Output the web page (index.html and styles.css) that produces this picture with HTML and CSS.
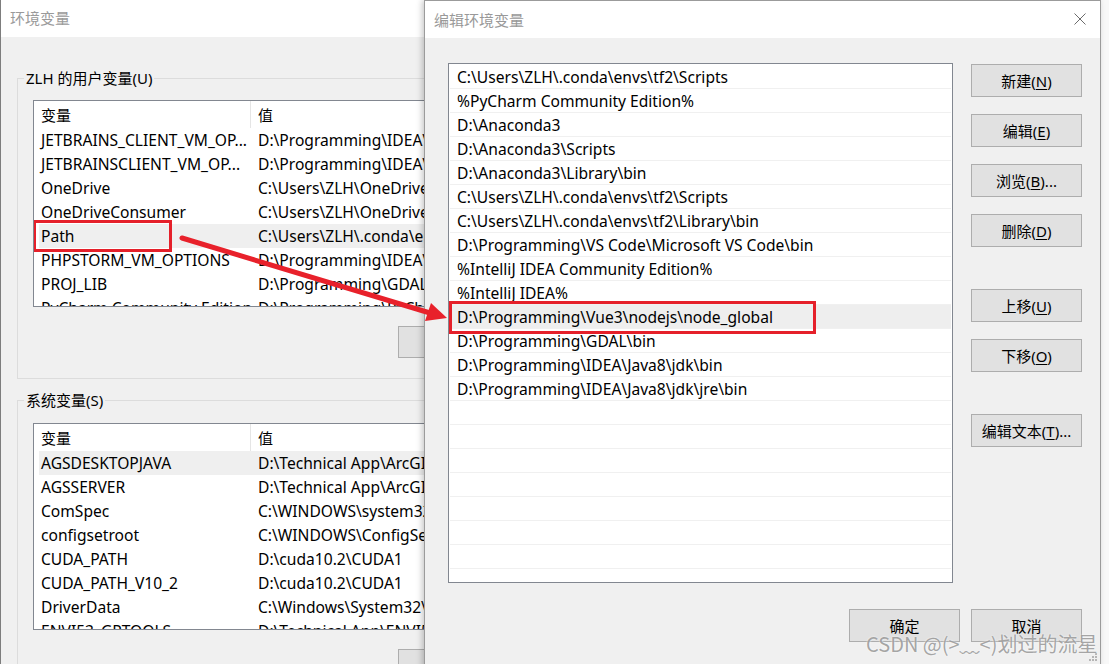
FILE: index.html
```html
<!DOCTYPE html>
<html lang="zh-CN">
<head>
<meta charset="utf-8">
<title>编辑环境变量</title>
<link rel="stylesheet" href="styles.css">
</head>
<body>
<div class="desktop">

  <section class="win env-win">
    <header class="titlebar">环境变量</header>
    <div class="env-body">
      <fieldset class="group">
        <legend>ZLH 的用户变量(U)</legend>
        <div class="listview">
          <div class="lv-head"><div class="c1">变量</div><div class="c2">值</div></div>
          <div class="lv-row"><div class="c1">JETBRAINS_CLIENT_VM_OP...</div><div class="c2">D:\Programming\IDEA\ja-netfilter</div></div>
          <div class="lv-row"><div class="c1">JETBRAINSCLIENT_VM_OP...</div><div class="c2">D:\Programming\IDEA\ja-netfilter</div></div>
          <div class="lv-row"><div class="c1">OneDrive</div><div class="c2">C:\Users\ZLH\OneDrive</div></div>
          <div class="lv-row"><div class="c1">OneDriveConsumer</div><div class="c2">C:\Users\ZLH\OneDrive</div></div>
          <div class="lv-row sel"><div class="c1">Path</div><div class="c2">C:\Users\ZLH\.conda\envs\tf2</div><span class="mark mark-path"></span></div>
          <div class="lv-row"><div class="c1">PHPSTORM_VM_OPTIONS</div><div class="c2">D:\Programming\IDEA\ja-netfilter</div></div>
          <div class="lv-row"><div class="c1">PROJ_LIB</div><div class="c2">D:\Programming\GDAL\projlib</div></div>
          <div class="lv-row"><div class="c1">PyCharm Community Edition</div><div class="c2">D:\Programming\PyCharm</div></div>
        </div>
        <div class="btn-row">
          <button class="btn">新建(<u>N</u>)...</button>
        </div>
      </fieldset>

      <fieldset class="group group-sys">
        <legend>系统变量(S)</legend>
        <div class="listview">
          <div class="lv-head"><div class="c1">变量</div><div class="c2">值</div></div>
          <div class="lv-row sel"><div class="c1">AGSDESKTOPJAVA</div><div class="c2">D:\Technical App\ArcGIS</div></div>
          <div class="lv-row"><div class="c1">AGSSERVER</div><div class="c2">D:\Technical App\ArcGIS</div></div>
          <div class="lv-row"><div class="c1">ComSpec</div><div class="c2">C:\WINDOWS\system32</div></div>
          <div class="lv-row"><div class="c1">configsetroot</div><div class="c2">C:\WINDOWS\ConfigSetRoot</div></div>
          <div class="lv-row"><div class="c1">CUDA_PATH</div><div class="c2">D:\cuda10.2\CUDA1</div></div>
          <div class="lv-row"><div class="c1">CUDA_PATH_V10_2</div><div class="c2">D:\cuda10.2\CUDA1</div></div>
          <div class="lv-row"><div class="c1">DriverData</div><div class="c2">C:\Windows\System32\Drivers</div></div>
          <div class="lv-row"><div class="c1">ENVI53_GPTOOLS</div><div class="c2">D:\Technical App\ENVI53</div></div>
        </div>
        <div class="btn-row">
          <button class="btn">新建(<u>W</u>)...</button>
        </div>
      </fieldset>
    </div>
  </section>

  <section class="win edit-dlg">
    <header class="dlg-title">
      <span>编辑环境变量</span>
      <svg class="close" width="12" height="12" viewBox="0 0 12 12" aria-hidden="true"><path d="M0.5 0.5 L11.5 11.5 M11.5 0.5 L0.5 11.5" stroke="#6b6b6b" stroke-width="1" fill="none"/></svg>
    </header>
    <div class="dlg-body">
      <div class="dlg-main">
        <div class="path-list">
          <div class="path-row">C:\Users\ZLH\.conda\envs\tf2\Scripts</div>
          <div class="path-row">%PyCharm Community Edition%</div>
          <div class="path-row">D:\Anaconda3</div>
          <div class="path-row">D:\Anaconda3\Scripts</div>
          <div class="path-row">D:\Anaconda3\Library\bin</div>
          <div class="path-row">C:\Users\ZLH\.conda\envs\tf2\Scripts</div>
          <div class="path-row">C:\Users\ZLH\.conda\envs\tf2\Library\bin</div>
          <div class="path-row">D:\Programming\VS Code\Microsoft VS Code\bin</div>
          <div class="path-row">%IntelliJ IDEA Community Edition%</div>
          <div class="path-row">%IntelliJ IDEA%</div>
          <div class="path-row sel">D:\Programming\Vue3\nodejs\node_global<span class="mark mark-node"></span></div>
          <div class="path-row">D:\Programming\GDAL\bin</div>
          <div class="path-row">D:\Programming\IDEA\Java8\jdk\bin</div>
          <div class="path-row">D:\Programming\IDEA\Java8\jdk\jre\bin</div>
          <div class="path-row"></div>
          <div class="path-row"></div>
          <div class="path-row"></div>
          <div class="path-row"></div>
          <div class="path-row"></div>
          <div class="path-row"></div>
          <div class="path-row"></div>
          <div class="path-row"></div>
        </div>
        <div class="side">
          <button class="btn">新建(<u>N</u>)</button>
          <button class="btn">编辑(<u>E</u>)</button>
          <button class="btn">浏览(<u>B</u>)...</button>
          <button class="btn">删除(<u>D</u>)</button>
          <button class="btn spaced">上移(<u>U</u>)</button>
          <button class="btn">下移(<u>O</u>)</button>
          <button class="btn spaced">编辑文本(<u>T</u>)...</button>
        </div>
      </div>
      <div class="dlg-foot">
        <button class="btn">确定</button>
        <button class="btn">取消</button>
      </div>
    </div>
  </section>

  <svg class="arrow" width="1109" height="664" viewBox="0 0 1109 664" aria-hidden="true">
    <line x1="182" y1="238" x2="430" y2="313" stroke="#e8212b" stroke-width="5" stroke-linecap="round"/>
    <polygon points="447,318 425,321 431,303" fill="#e8212b"/>
  </svg>

  <svg class="grip" width="10" height="10" viewBox="0 0 10 10" aria-hidden="true">
    <rect x="7" y="1" width="2" height="2" fill="#b5b5b5"/>
    <rect x="4" y="4" width="2" height="2" fill="#b5b5b5"/>
    <rect x="7" y="4" width="2" height="2" fill="#b5b5b5"/>
    <rect x="1" y="7" width="2" height="2" fill="#b5b5b5"/>
    <rect x="4" y="7" width="2" height="2" fill="#b5b5b5"/>
    <rect x="7" y="7" width="2" height="2" fill="#b5b5b5"/>
  </svg>

  <div class="watermark">CSDN @(&gt;﹏&lt;)划过的流星</div>
</div>
</body>
</html>
```

FILE: styles.css
```css
* { box-sizing: border-box; }

html, body {
  margin: 0;
  padding: 0;
}

body {
  width: 1109px;
  height: 664px;
  overflow: hidden;
  background: #f8f8f8;
  font-family: "Noto Sans", "Noto Sans CJK SC", sans-serif;
  font-size: 15px;
  color: #000;
}

.desktop {
  position: relative;
  width: 1109px;
  height: 664px;
  overflow: hidden;
}

.win {
  position: absolute;
  background: #f0f0f0;
}

/* ---------- background window ---------- */
.env-win {
  left: 0;
  top: 0;
  width: 560px;
  height: 720px;
  border-left: 1px solid #7d7d7d;
}

.titlebar {
  height: 37px;
  line-height: 37px;
  background: #fff;
  color: #9a9a9a;
  padding-left: 9px;
}

.env-body {
  padding: 31px 0 0 16px;
}

.group {
  margin: 0;
  width: 530px;
  min-width: 0;
  border: 1px solid #dcdcdc;
  padding: 12px 0 20px 6px;
}

.group legend {
  padding: 0 2px;
  line-height: 20px;
}

.group-sys {
  margin-top: 11px;
  padding-top: 13px;
}

.listview {
  margin-left: 9px;
  width: 500px;
  height: 207px;
  border: 1px solid #828790;
  background: #fff;
  overflow: hidden;
}

.lv-head {
  display: grid;
  grid-template-columns: 212px 1fr;
  height: 27px;
  margin-left: 5px;
}

.lv-head > div {
  height: 27px;
  padding-top: 2px;
  line-height: 25px;
}

.lv-head .c1 {
  padding-left: 2px;
  border-right: 1px solid #e5e5e5;
}

.lv-head .c2 { padding-left: 7px; }

.lv-row {
  position: relative;
  display: grid;
  grid-template-columns: 212px 1fr;
  height: 24px;
  line-height: 24px;
  margin-left: 5px;
  white-space: nowrap;
  font-size: 15.6px;
}

.lv-row > div { overflow: hidden; }
.lv-row .c1 { padding-left: 2px; }
.lv-row .c2 { padding-left: 7px; }

.lv-row.sel { background: #efefef; }

.btn-row {
  display: flex;
  gap: 10px;
  margin: 19px 0 0 374px;
}

.btn-row .btn {
  flex: none;
  width: 111px;
  height: 32px;
  text-align: left;
  padding-left: 34px;
}

/* ---------- buttons ---------- */
.btn {
  display: block;
  margin: 0;
  padding: 0;
  width: 111px;
  height: 33px;
  border: 1px solid #adadad;
  background: #e1e1e1;
  font: inherit;
  color: #000;
  text-align: center;
  white-space: nowrap;
}

.btn u { text-underline-offset: 2px; }

/* ---------- overlay marks ---------- */
.mark {
  position: absolute;
  border: 3px solid #e5202a;
  pointer-events: none;
}

.mark-path {
  left: -6px;
  top: -4px;
  width: 139px;
  height: 32px;
}

/* ---------- edit dialog ---------- */
.edit-dlg {
  left: 424px;
  top: 0;
  width: 677px;
  height: 690px;
  border: 1px solid #9b9b9b;
  box-shadow: -2px 0 6px rgba(0, 0, 0, 0.22);
}

.dlg-title {
  height: 37px;
  background: #fff;
  display: flex;
  align-items: center;
  justify-content: space-between;
  padding: 0 14px 1px 9px;
  color: #999;
}

.close { display: block; }

.dlg-body {
  padding: 25px 18px 0 23px;
}

.dlg-main {
  display: flex;
  gap: 18px;
}

.path-list {
  width: 505px;
  height: 520px;
  border: 1px solid #828790;
  background: #fff;
  padding: 1px;
  overflow: hidden;
}

.path-row {
  position: relative;
  height: 24px;
  line-height: 24px;
  border-bottom: 1px solid #f0f0f0;
  padding-left: 7px;
  white-space: nowrap;
  font-size: 15.6px;
}

.path-row.sel { background: #eeeeee; }

.mark-node {
  left: -1px;
  top: -4px;
  width: 367px;
  height: 33px;
}

.side {
  display: flex;
  flex-direction: column;
  gap: 17px;
  width: 111px;
  padding-top: 1px;
}

.side .spaced { margin-top: 25px; }

.dlg-foot {
  display: flex;
  justify-content: flex-end;
  gap: 11px;
  margin-top: 26px;
}

/* ---------- overlays ---------- */
.arrow {
  position: absolute;
  left: 0;
  top: 0;
  pointer-events: none;
}

.grip {
  position: absolute;
  left: 1088px;
  top: 652px;
}

.watermark {
  position: absolute;
  left: 866px;
  top: 630px;
  font-family: "Noto Sans CJK SC", sans-serif;
  font-size: 20px;
  line-height: 28px;
  color: rgba(150, 150, 150, 0.85);
  text-shadow: 0 0 2px rgba(255, 255, 255, 0.9);
  white-space: nowrap;
  pointer-events: none;
}
```
